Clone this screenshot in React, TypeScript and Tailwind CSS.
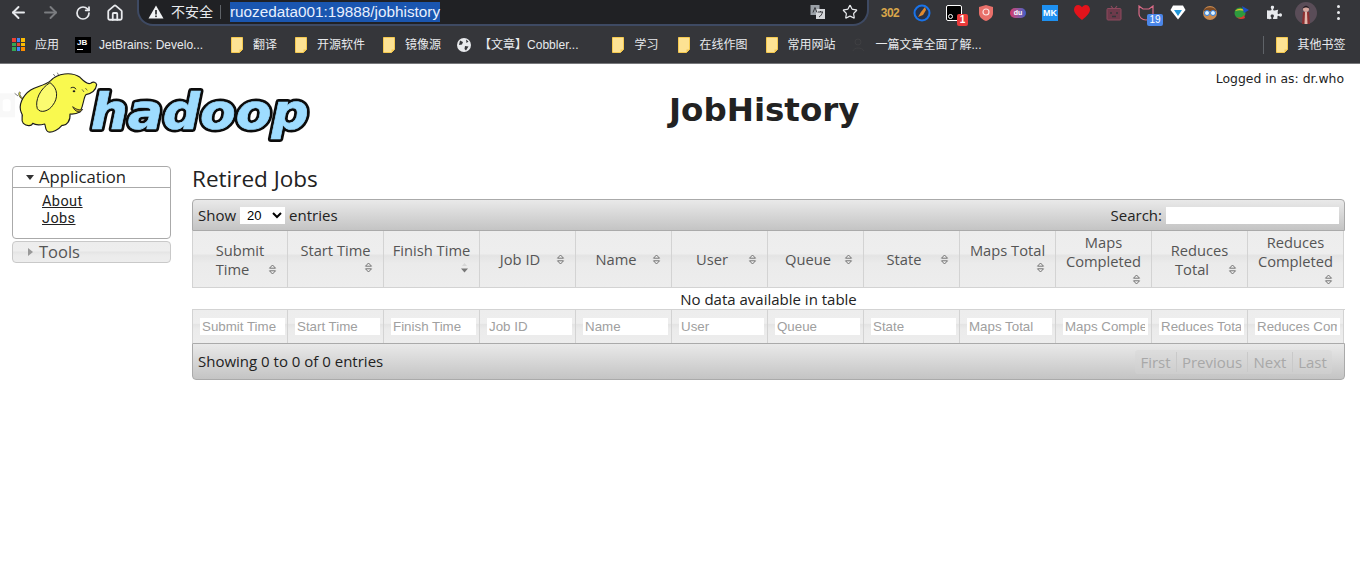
import { ArrowLeft, ArrowRight, Home, RotateCw, Star } from 'lucide-react';
import { FaPuzzlePiece } from 'react-icons/fa';

const pageFont = "font-['Open_Sans','Noto_Sans_CJK_SC',sans-serif]";
const chromeFont = "font-['Liberation_Sans','Noto_Sans_CJK_SC',sans-serif]";

const columns = [
  { lines: ['Submit', 'Time'], inline: true, filter: 'Submit Time' },
  { lines: ['Start Time'], inline: false, filter: 'Start Time' },
  { lines: ['Finish Time'], inline: false, filter: 'Finish Time', active: true },
  { lines: ['Job ID'], inline: true, filter: 'Job ID' },
  { lines: ['Name'], inline: true, filter: 'Name' },
  { lines: ['User'], inline: true, filter: 'User' },
  { lines: ['Queue'], inline: true, filter: 'Queue' },
  { lines: ['State'], inline: true, filter: 'State' },
  { lines: ['Maps Total'], inline: false, filter: 'Maps Total' },
  { lines: ['Maps', 'Completed'], inline: false, filter: 'Maps Completed' },
  { lines: ['Reduces', 'Total'], inline: true, filter: 'Reduces Total' },
  { lines: ['Reduces', 'Completed'], inline: false, filter: 'Reduces Completed' },
];

function Folder() {
  return (
    <svg width="12" height="16" viewBox="0 0 12 16" className="shrink-0">
      <path d="M.5.5h11v12l-3 3H.5z" fill="#fde293" stroke="#f5c94f" />
      <path d="M8.5 15.5v-3h3" fill="#f5c94f" />
    </svg>
  );
}

function Bookmark({ label, className, icon }: { label: string; className?: string; icon?: React.ReactNode }) {
  return (
    <div className={`flex items-center text-xs text-[#e8eaed] whitespace-nowrap ${className ?? ''}`}>
      {icon ?? <Folder />}
      <span>{label}</span>
    </div>
  );
}

function AppsIcon() {
  const colors = ['#ea4335', '#4285f4', '#fbbc04', '#34a853', '#ea4335', '#fbbc04', '#34a853', '#4285f4', '#fb8c00'];
  return (
    <div className="grid grid-cols-3 gap-[1px] w-[13px] h-[13px] shrink-0">
      {colors.map((c, i) => (
        <div key={i} style={{ backgroundColor: c }} />
      ))}
    </div>
  );
}

function ExtSlot({ children }: { children: React.ReactNode }) {
  return <div className="w-[32px] h-[24px] flex items-center justify-center relative shrink-0">{children}</div>;
}

function Toolbar() {
  return (
    <div className={`flex items-start h-[30px] bg-[#35363a] ${chromeFont}`}>
      <div className="flex items-center h-[25px] w-[137px] pl-[2px] text-[#e8eaed]">
        <div className="w-[32px] flex justify-center"><ArrowLeft size={19} strokeWidth={2.4} /></div>
        <div className="w-[33px] flex justify-center text-[#7b7d80]"><ArrowRight size={19} strokeWidth={2.4} /></div>
        <div className="w-[32px] flex justify-center"><RotateCw size={16} strokeWidth={2.6} /></div>
        <div className="w-[32px] flex justify-center"><Home size={18} strokeWidth={2.4} /></div>
      </div>
      <div className="flex items-center w-[732px] h-[26px] bg-[#202124] border-2 border-t-0 border-[#3e4a63] rounded-br-[16px] rounded-bl-[16px] pl-[9px]">
        <svg width="16" height="14" viewBox="0 0 16 14" className="shrink-0">
          <path d="M8 .5 15.5 13.5H.5z" fill="#f1f3f4" />
          <rect x="7.2" y="5" width="1.6" height="4.5" fill="#202124" />
          <rect x="7.2" y="10.5" width="1.6" height="1.6" fill="#202124" />
        </svg>
        <span className="ml-[7px] text-[14px] text-[#e8eaed]">不安全</span>
        <div className="w-px h-[14px] bg-[#5f6368] ml-[7px]" />
        <span className="ml-[9px] bg-[#1a56b0] text-[#e8f0fe] text-[15.300px] leading-[20px]">ruozedata001:19888/jobhistory</span>
        <div className="flex-1" />
        <svg width="16" height="16" viewBox="0 0 16 16" className="shrink-0 mr-[16px]">
          <rect x="0.5" y="1" width="9" height="10" fill="#9aa0a6" />
          <rect x="6" y="5" width="9" height="10" fill="#d5d7da" />
          <path d="M3 8.5 5 3.5l2 5M8 8h5M10.5 7v1M9 13c2-1 3-3 3.500-5" stroke="#35363a" fill="none" strokeWidth="1" />
        </svg>
        <Star size={16} strokeWidth={1.8} className="text-[#e8eaed] mr-[9px]" />
      </div>
      <div className="flex items-center h-[25px] ml-[5px]">
        <ExtSlot>
          <span className="text-[12px] font-bold text-[#d9a64a] tracking-[-0.5px] leading-[12px]">302</span>
        </ExtSlot>
        <ExtSlot>
          <svg width="18" height="18" viewBox="0 0 18 18">
            <circle cx="9" cy="9" r="7.500" fill="#26324a" stroke="#1a73e8" strokeWidth="2" />
            <path d="M12 3 8 8l-3 5 5-2 3-5z" fill="#e08a2e" />
          </svg>
        </ExtSlot>
        <ExtSlot>
          <div className="w-[16px] h-[16px] bg-black border border-white rounded-[2px] flex items-end pl-[1px] pb-[1px]">
            <div className="w-[5px] h-[5px] rounded-full border border-white" />
          </div>
          <div className="absolute right-[2px] bottom-[-1px] min-w-[11px] h-[12px] bg-[#ea3a3a] rounded-[2px] text-white text-[10px] font-bold leading-[12px] text-center">1</div>
        </ExtSlot>
        <ExtSlot>
          <svg width="16" height="18" viewBox="0 0 16 18">
            <path d="M8 1 15 3v6c0 4-3 6.500-7 8-4-1.500-7-4-7-8V3z" fill="#e8706a" />
            <circle cx="8" cy="8" r="3" fill="none" stroke="#fbe3e1" strokeWidth="1.200" />
          </svg>
        </ExtSlot>
        <ExtSlot>
          <div className="w-[16px] h-[10px] rounded-full bg-gradient-to-r from-[#d6336c] to-[#3a5bc7] text-white text-[7px] font-bold leading-[10px] text-center">du</div>
        </ExtSlot>
        <ExtSlot>
          <div className="w-[16px] h-[16px] bg-[#1e90f0] text-white text-[9px] font-bold leading-[16px] text-center">MK</div>
        </ExtSlot>
        <ExtSlot>
          <svg width="16" height="15" viewBox="0 0 16 15">
            <path d="M8 15C3 11 0 8 0 4.500 0 2 2 0 4.200 0 6 0 7.200 1 8 2.300 8.800 1 10 0 11.800 0 14 0 16 2 16 4.500 16 8 13 11 8 15z" fill="#e3131b" />
          </svg>
        </ExtSlot>
        <ExtSlot>
          <svg width="16" height="16" viewBox="0 0 16 16">
            <path d="M5 1 7 3.500M11 1 9 3.500" stroke="#8d4a5e" strokeWidth="1.200" />
            <rect x="1" y="3.500" width="14" height="11.500" rx="1" fill="#6e3a4b" stroke="#8d4a5e" />
            <path d="M5 7v2M11 7v2M6 11.500h4" stroke="#35363a" strokeWidth="1.500" />
          </svg>
        </ExtSlot>
        <ExtSlot>
          <svg width="18" height="16" viewBox="0 0 18 16">
            <path d="M2 1 6 4h6l4-3v8c0 3-3 6-7 6s-7-3-7-6z" fill="none" stroke="#d96a86" strokeWidth="1.200" />
          </svg>
          <div className="absolute right-[-1px] bottom-[-1px] w-[16px] h-[12px] bg-[#4a86e8] rounded-[2px] text-white text-[10px] leading-[12px] text-center">19</div>
        </ExtSlot>
        <ExtSlot>
          <svg width="16" height="15" viewBox="0 0 16 15">
            <path d="M3 .5h10L15.500 5 8 14.500.5 5z" fill="#fff" />
            <path d="M4 5h8L8 11z" fill="#2196d8" />
          </svg>
        </ExtSlot>
        <ExtSlot>
          <svg width="16" height="16" viewBox="0 0 16 16">
            <circle cx="8" cy="8" r="7" fill="#c98a4e" />
            <path d="M1.500 6C3 1 13 1 14.500 6z" fill="#7a4a25" />
            <circle cx="5" cy="8" r="2.500" fill="#dff3ff" stroke="#2b7de0" />
            <circle cx="11" cy="8" r="2.500" fill="#dff3ff" stroke="#2b7de0" />
          </svg>
        </ExtSlot>
        <ExtSlot>
          <svg width="16" height="15" viewBox="0 0 16 15">
            <circle cx="6" cy="8" r="5.500" fill="#2e9b3d" />
            <path d="M1 6c3-3 8-3 10 0-4-1-7-1-10 0z" fill="#e5c12e" />
            <path d="M8 1 15 5l-5 3z" fill="#1c4fc4" />
            <path d="M2 12c3 1 6 1 8-2l1 3c-3 2-6 1-9-1z" fill="#d83a2e" />
          </svg>
        </ExtSlot>
        <ExtSlot>
          <FaPuzzlePiece size={15} className="text-[#e8eaed]" />
        </ExtSlot>
        <ExtSlot>
          <svg width="22" height="22" viewBox="0 0 22 22">
            <circle cx="11" cy="11" r="11" fill="#5a4d58" />
            <path d="M7 22 8 10h6l1 12z" fill="#8c2f30" />
            <path d="M9.500 22 10 10h2l.5 12z" fill="#e2b8ae" />
            <circle cx="11" cy="7" r="3" fill="#d9a9a0" />
            <path d="M7.500 7C8 2.500 14 2.500 14.500 7 13 5 9 5 7.500 7z" fill="#221a22" />
          </svg>
        </ExtSlot>
        <div className="ml-[15px] flex flex-col gap-[3px]">
          <div className="w-[3px] h-[3px] rounded-full bg-[#e8eaed]" />
          <div className="w-[3px] h-[3px] rounded-full bg-[#e8eaed]" />
          <div className="w-[3px] h-[3px] rounded-full bg-[#e8eaed]" />
        </div>
      </div>
    </div>
  );
}

function BookmarksBar() {
  return (
    <div className={`flex items-center h-[34px] pb-[4px] pl-[12px] bg-[#35363a] border-b border-[#77787b] ${chromeFont}`}>
      <Bookmark label="应用" className="gap-[10px]" icon={<AppsIcon />} />
      <Bookmark
        label="JetBrains: Develo..."
        className="ml-[16px] gap-[8px]"
        icon={<div className="w-[16px] h-[16px] bg-black text-white text-[8px] font-bold leading-[9px] pl-[2px] pt-[1px] shrink-0">JB<div className="w-[6px] h-px bg-white mt-[2px]" /></div>}
      />
      <Bookmark label="翻译" className="ml-[28px] gap-[10px]" />
      <Bookmark label="开源软件" className="ml-[18px] gap-[10px]" />
      <Bookmark label="镜像源" className="ml-[18px] gap-[10px]" />
      <Bookmark
        label="【文章】Cobbler..."
        className="ml-[16px] gap-[8px]"
        icon={
          <svg width="14" height="14" viewBox="0 0 14 14" className="shrink-0">
            <circle cx="7" cy="7" r="7" fill="#e8eaed" />
            <path d="M3 2.500 6 4 5 6.500l-3 .5zM8 8l3.500.5L9 12.500 7.500 11zM9 1.500l2.500 2L9.500 5z" fill="#35363a" />
          </svg>
        }
      />
      <Bookmark label="学习" className="ml-[34px] gap-[10px]" />
      <Bookmark label="在线作图" className="ml-[19px] gap-[10px]" />
      <Bookmark label="常用网站" className="ml-[18px] gap-[10px]" />
      <Bookmark
        label="一篇文章全面了解..."
        className="ml-[15px] gap-[10px]"
        icon={
          <svg width="15" height="15" viewBox="0 0 15 15" className="shrink-0">
            <circle cx="7" cy="5" r="3" fill="none" stroke="#3f3f42" />
            <path d="M2 14c1-4 9-4 11 0" fill="none" stroke="#3f3f42" />
          </svg>
        }
      />
      <div className="w-px h-[18px] bg-[#5f6368] ml-[281px]" />
      <Bookmark label="其他书签" className="ml-[12px] gap-[10px]" />
    </div>
  );
}

function HadoopLogo() {
  const word = {
    x: 272,
    y: 196,
    fontFamily: 'DejaVu Sans, sans-serif',
    fontWeight: 700,
    fontStyle: 'italic',
    fontSize: 150,
    textLength: 654,
    lengthAdjust: 'spacingAndGlyphs' as const,
  };

  return (
    <svg width="330" height="90" viewBox="0 0 990 270" className="block">
      <rect x="0" y="88" width="45" height="72" fill="#f8f8f8" />
      <rect x="8" y="106" width="24" height="36" rx="8" fill="#ffffff" />
      {/* tail */}
      <path d="M76 108C62 104 54 92 60 84" fill="none" stroke="#222" strokeWidth="5" />
      <path d="M76 108C62 104 54 92 60 84" fill="none" stroke="#f7f75a" strokeWidth="2.500" />
      {/* body and head */}
      <path
        d="M152 50C172 28 214 22 240 40C252 52 262 62 272 58C280 52 288 54 290 62C288 76 276 88 258 92C250 100 252 122 240 144C226 152 214 150 210 150C212 170 200 186 186 184C176 196 158 206 146 204C134 200 138 186 134 180C118 184 104 182 98 178C96 186 80 188 70 178C60 168 72 156 64 146C54 124 68 94 92 78C110 66 134 66 152 50Z"
        fill="#f9f94f"
        stroke="#1d1d1d"
        strokeWidth="3.500"
        strokeLinejoin="round"
      />
      {/* ear */}
      <path
        d="M150 56C120 74 104 110 112 134C122 150 148 140 158 124C174 104 176 74 150 56Z"
        fill="#fbfb70"
        stroke="#1d1d1d"
        strokeWidth="3"
      />
      {/* eye, mouth, lines */}
      <path d="M212 72C218 68 226 70 228 76" fill="none" stroke="#1d1d1d" strokeWidth="3" />
      <ellipse cx="222" cy="82" rx="4" ry="3" fill="#1d1d1d" />
      <path d="M218 128C226 146 242 148 248 136C240 140 228 136 218 128Z" fill="#b9a030" stroke="#1d1d1d" strokeWidth="2.500" />
      <path d="M246 76 252 84M256 72l6 7M160 30l6 8M172 26l4 8M44 88l10 8" stroke="#333" strokeWidth="2" />
      {/* wordmark: black outline under a slightly fattened light blue fill */}
      <text {...word} fill="#0c0c0c" stroke="#0c0c0c" strokeWidth="18" strokeLinejoin="round">hadoop</text>
      <text {...word} fill="#9edcff" stroke="#9edcff" strokeWidth="2">hadoop</text>
    </svg>
  );
}

function Sidebar() {
  return (
    <div className="w-[159px] ml-[12px] text-[#222]">
      <div className="border border-[#aaa] rounded-[4px] h-[73px]">
        <div className="flex items-center h-[21px] border-b border-[#aaa] text-[16.700px] leading-[20px]">
          <svg width="8" height="5" viewBox="0 0 8 5" className="ml-[13px] mr-[5px]">
            <path d="M0 0h8L4 5z" fill="#333" />
          </svg>
          <span>Application</span>
        </div>
        <div className="flex flex-col pl-[29px] pt-[5px] font-['Roboto',sans-serif] text-[14.500px] leading-[17px] tracking-[0.4px]">
          <a className="underline">About</a>
          <a className="underline">Jobs</a>
        </div>
      </div>
      <div className="flex items-center mt-[2px] h-[22px] border border-[#c9c9c9] rounded-[4px] text-[16.500px] text-[#555] bg-[linear-gradient(#ededed_0%,#eeeeee_45%,#e4e4e4_50%,#ebebeb_65%,#ededed_100%)]">
        <svg width="5" height="8" viewBox="0 0 5 8" className="ml-[15px] mr-[6px]">
          <path d="M0 0l5 4-5 4z" fill="#999" />
        </svg>
        <span>Tools</span>
      </div>
    </div>
  );
}

function SortIcon({ active }: { active?: boolean }) {
  return (
    <svg width="9" height="11" viewBox="0 0 9 11" className="block">
      {active ? (
        <>
          <path d="M4.500 1 2 4h5z" fill="#d6d6d6" />
          <path d="M1 6.500h7L4.500 10.500z" fill="#777" />
        </>
      ) : (
        <path d="M4.500 1 1.500 4.200h6zM4.500 10 1.500 6.800h6z" fill="#eee" stroke="#666" strokeWidth="0.900" />
      )}
    </svg>
  );
}

function DataTable() {
  const cellBg = 'bg-[linear-gradient(#ededed_0%,#eeeeee_40%,#e4e4e4_44%,#ebebeb_58%,#ededed_100%)]';
  const barBg = 'bg-[linear-gradient(#e9e9e9_0%,#c4c4c4_100%)]';

  return (
    <div className="w-[1153px] text-[#222]">
      <div className={`flex items-center justify-between h-[32px] border border-[#aaa] rounded-t-[4px] pl-[5px] pr-[5px] text-[15px] ${barBg}`}>
        <div className="flex items-center">
          Show
          <select className="w-[45px] h-[17px] mx-[4px] bg-white text-[13px] leading-[17px] font-['Liberation_Sans',sans-serif] text-black pl-[3px]" defaultValue="20">
            <option>20</option>
          </select>
          entries
        </div>
        <div className="flex items-center">
          Search:
          <div className="w-[173px] h-[17px] bg-white ml-[4px]" />
        </div>
      </div>
      <div className="grid grid-cols-[repeat(12,96px)] h-[57px]">
        {columns.map((col) => (
          <div
            key={col.filter}
            className={`flex flex-col justify-center first:border-l border-r border-b border-[#d3d3d3] text-[14.700px] leading-[19px] text-[#555] ${col.inline ? 'pt-[1px]' : col.lines.length === 1 ? 'pb-[4px]' : ''} ${cellBg}`}
          >
            {col.lines.map((line, i) => {
              const isLast = i === col.lines.length - 1;
              if (isLast && col.inline) {
                return (
                  <div key={line} className="grid grid-cols-[1fr_15px] items-center pl-[4px] pr-[4px]">
                    <span className="text-center">{line}</span>
                    <SortIcon />
                  </div>
                );
              }
              return (
                <div key={line} className="text-center whitespace-nowrap">
                  {line}
                </div>
              );
            })}
            {!col.inline && (
              <div className={`flex justify-end pr-[10px] ${col.lines.length > 1 ? 'mt-[3px]' : 'mt-[2px]'}`}>
                <SortIcon active={col.active} />
              </div>
            )}
          </div>
        ))}
      </div>
      <div className="h-[21px] text-center text-[15px] leading-[23px]">No data available in table</div>
      <div className="grid grid-cols-[repeat(12,96px)] border-t border-[#d3d3d3] h-[34px]">
        {columns.map((col) => (
          <div key={col.filter} className={`flex items-center pl-[7px] first:border-l border-r border-[#d3d3d3] ${cellBg}`}>
            <input
              readOnly
              placeholder={col.filter}
              className="w-[85px] h-[17px] bg-white pl-[2px] pr-[3px] text-[13.333px] font-['Liberation_Sans',sans-serif] placeholder:text-[#a0a0a0] outline-none"
            />
          </div>
        ))}
      </div>
      <div className={`flex items-center justify-between h-[37px] border border-[#aaa] rounded-b-[4px] pl-[5px] pr-[12px] text-[15px] ${barBg}`}>
        <span>Showing 0 to 0 of 0 entries</span>
        <div className="flex h-[24px] items-center text-[#a8a8a8] bg-[#d4d4d4]/40 rounded-[3px] divide-x divide-[#c9c9c9] text-center">
          <span className="w-[42px] leading-[20px]">First</span>
          <span className="w-[71px] leading-[20px]">Previous</span>
          <span className="w-[45px] leading-[20px]">Next</span>
          <span className="w-[39px] leading-[20px]">Last</span>
        </div>
      </div>
    </div>
  );
}

export default function App() {
  return (
    <div className={`w-[1360px] h-[578px] overflow-hidden bg-white ${pageFont}`}>
      <Toolbar />
      <BookmarksBar />
      <div className="flex h-[102px]">
        <HadoopLogo />
        <div className="flex-1 pt-[24px] pl-[339px] font-['DejaVu_Sans',sans-serif] text-[32.500px] font-bold leading-[44px] text-[#222]">JobHistory</div>
        <div className="pt-[6px] pr-[16px] font-['DejaVu_Sans',sans-serif] text-[12.400px] text-[#222]">Logged in as: dr.who</div>
      </div>
      <div className="flex">
        <Sidebar />
        <div className="ml-[21px]">
          <h2 className="h-[33px] text-[22.500px] leading-[25px] text-[#222]">Retired Jobs</h2>
          <DataTable />
        </div>
      </div>
    </div>
  );
}
